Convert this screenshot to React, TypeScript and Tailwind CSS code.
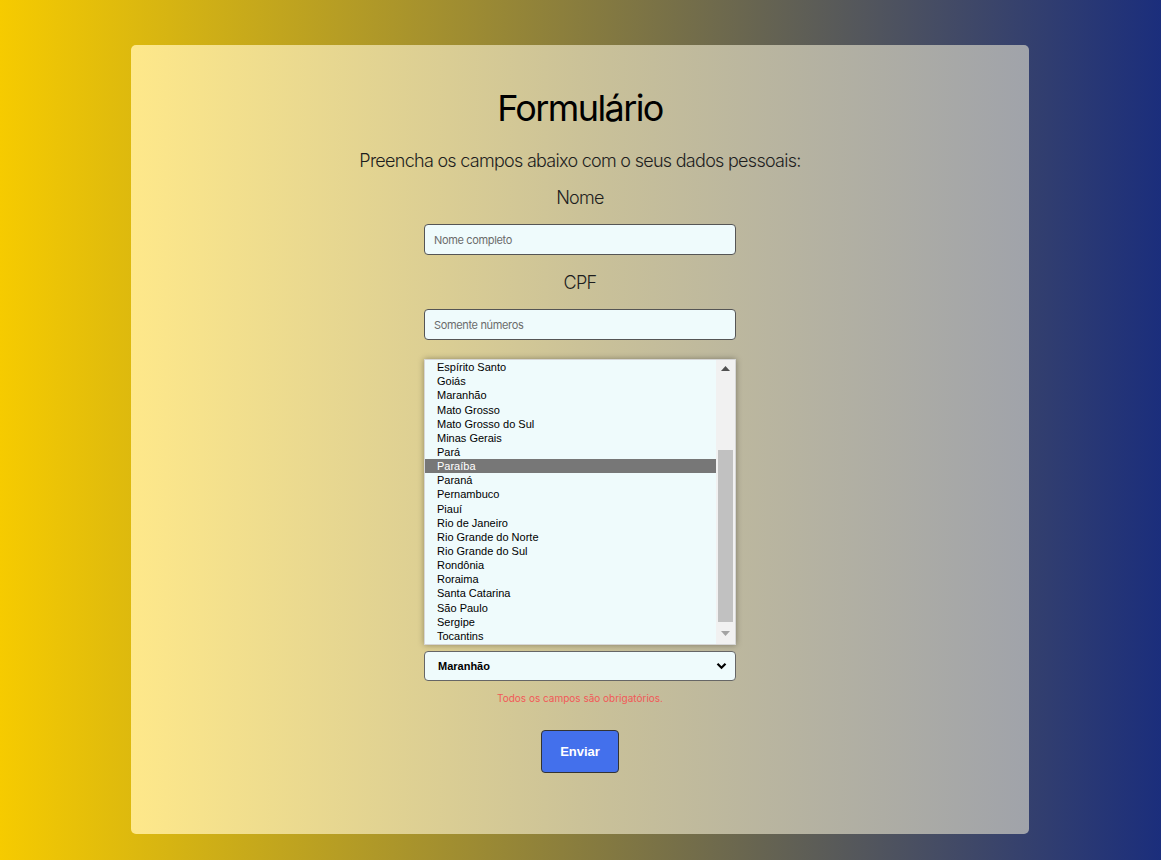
import React from "react";

const states = [
  "Espírito Santo",
  "Goiás",
  "Maranhão",
  "Mato Grosso",
  "Mato Grosso do Sul",
  "Minas Gerais",
  "Pará",
  "Paraíba",
  "Paraná",
  "Pernambuco",
  "Piauí",
  "Rio de Janeiro",
  "Rio Grande do Norte",
  "Rio Grande do Sul",
  "Rondônia",
  "Roraima",
  "Santa Catarina",
  "São Paulo",
  "Sergipe",
  "Tocantins",
];

export default function App() {
  return (
    <div className="w-full h-[860px] bg-[linear-gradient(to_right,#f6cb00,#1b2e7c)] flex justify-start pl-[131px] pt-[45px] font-['Inter',sans-serif]">
      <div className="w-[898px] h-[789px] rounded-[5px] bg-[linear-gradient(to_right,#fee88a,#cbc298_50%,#a0a3aa)] flex flex-col items-center">
        <h1 className="mt-[41px] text-[36px] leading-[44px] text-black font-normal tracking-[-1.6px]">
          Formulário
        </h1>
        <p className="mt-[20px] text-[18px] leading-[22px] font-light text-[#1e1e1e] tracking-[-0.72px]">
          Preencha os campos abaixo com o seus dados pessoais:
        </p>
        <label className="mt-[15px] text-[18px] leading-[22px] font-light text-[#1e1e1e] tracking-[-0.7px]">
          Nome
        </label>
        <input
          className="mt-[15px] w-[312px] h-[31px] bg-[#effbfc] border border-[#555] rounded-[4px] px-[9px] text-[11px] tracking-[-0.35px] placeholder:text-[#6b6b6b] outline-none font-['Inter',sans-serif]"
          placeholder="Nome completo"
        />
        <label className="mt-[17px] text-[18px] leading-[22px] font-light text-[#1e1e1e] tracking-[-0.7px]">
          CPF
        </label>
        <input
          className="mt-[15px] w-[312px] h-[31px] bg-[#effbfc] border border-[#555] rounded-[4px] px-[9px] text-[11px] tracking-[-0.35px] placeholder:text-[#6b6b6b] outline-none font-['Inter',sans-serif]"
          placeholder="Somente números"
        />
        <div className="mt-[19px] w-[312px] h-[286px] bg-[#effbfc] border border-[#d6d6d6] shadow-[0_0_6px_rgba(0,0,0,0.35)] flex font-['Liberation_Sans',Arial,sans-serif] text-[11px] text-black">
          <div className="flex-1 flex flex-col justify-end pb-[1px] overflow-hidden">
            {states.map((s) => (
              <div
                key={s}
                className={
                  s === "Paraíba"
                    ? "h-[14.15px] leading-[14px] pl-[12px] bg-[#777777] text-white"
                    : "h-[14.15px] leading-[14px] pl-[12px]"
                }
              >
                {s}
              </div>
            ))}
          </div>
          <div className="w-[19px] bg-[#f1f1f1] flex flex-col items-center">
            <div className="h-[17px] w-full flex items-center justify-center">
              <svg width="9" height="5" viewBox="0 0 9 5">
                <polygon points="0,5 9,5 4.5,0" fill="#505050" />
              </svg>
            </div>
            <div className="flex-1 w-full px-[2px] pb-[5px] flex flex-col justify-end">
              <div className="h-[172px] bg-[#c1c1c1]" />
            </div>
            <div className="h-[17px] w-full flex items-start pt-[4px] justify-center">
              <svg width="9" height="5" viewBox="0 0 9 5">
                <polygon points="0,0 9,0 4.5,5" fill="#a3a3a3" />
              </svg>
            </div>
          </div>
        </div>
        <div className="mt-[6px] w-[312px] h-[30px] bg-[#effbfc] border border-[#666] rounded-[4px] flex items-center justify-between pl-[13px] pr-[8px] font-['Liberation_Sans',Arial,sans-serif] text-[11px] font-bold text-black">
          <span>Maranhão</span>
          <svg width="11" height="8" viewBox="0 0 11 8">
            <polyline points="1.5,1.8 5.5,5.8 9.5,1.8" fill="none" stroke="#000" strokeWidth="2.2" />
          </svg>
        </div>
        <p className="mt-[11px] text-[10px] leading-[12px] text-[#f25858]">
          Todos os campos são obrigatórios.
        </p>
        <button className="mt-[26px] w-[78px] h-[43px] bg-[#4370ec] border border-[#333] rounded-[4px] text-white font-bold text-[13px] font-['Liberation_Sans',Arial,sans-serif]">
          Enviar
        </button>
      </div>
    </div>
  );
}
